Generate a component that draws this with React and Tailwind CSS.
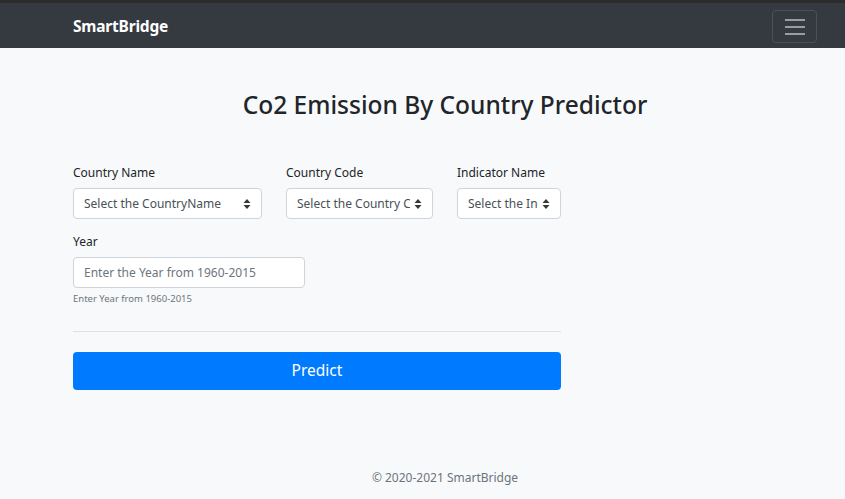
import React from 'react';

const font = { fontFamily: '"Noto Sans", "Open Sans", Arial, sans-serif' };

function Select({ placeholder, width }) {
  return (
    <div className={`relative h-[31px] ${width} bg-white border border-[#ced4da] rounded-[4px] flex items-center pl-[10px] pr-[22px] overflow-hidden`}>
      <span className="text-[12px] text-[#495057] whitespace-nowrap overflow-hidden">{placeholder}</span>
      <svg className="absolute right-[10px] top-[10px]" width="8" height="10" viewBox="0 0 8 10">
        <path d="M4 0 L7.5 4 L0.5 4 Z M4 10 L7.5 6 L0.5 6 Z" fill="#343a40" />
      </svg>
    </div>
  );
}

export default function App() {
  return (
    <div className="min-h-[499px] bg-[#f8f9fa] flex flex-col" style={font}>
      <div className="h-[3px] bg-[#2c2c2c]" />
      <nav className="h-[45px] bg-[#343a40] flex items-center justify-between pl-[73px] pr-[28px]">
        <span className="mt-[3px] text-white font-bold text-[15.5px] tracking-[-0.2px]">SmartBridge</span>
        <button className="mt-[2px] w-[45px] h-[33px] border border-[#4b5157] rounded-[4px] flex flex-col items-center justify-center gap-[5px]">
          <span className="block w-[20px] h-[2px] bg-[#9a9da0]" />
          <span className="block w-[20px] h-[2px] bg-[#9a9da0]" />
          <span className="block w-[20px] h-[2px] bg-[#9a9da0]" />
        </button>
      </nav>

      <main className="flex-1 pl-[73px]">
        <h1 className="text-[24.5px] leading-[36px] font-medium text-[#212529] text-center w-[744px] mt-[39px] mb-[41px]">
          Co2 Emission By Country Predictor
        </h1>

        <div className="w-[488px]">
          <div className="flex gap-[24px]">
            <div className="flex flex-col gap-[6px]">
              <label className="text-[12px] leading-[18px] text-[#212529]">Country Name</label>
              <Select placeholder="Select the CountryName" width="w-[189px]" />
            </div>
            <div className="flex flex-col gap-[6px]">
              <label className="text-[12px] leading-[18px] text-[#212529]">Country Code</label>
              <Select placeholder="Select the Country Code" width="w-[147px]" />
            </div>
            <div className="flex flex-col gap-[6px]">
              <label className="text-[12px] leading-[18px] text-[#212529]">Indicator Name</label>
              <Select placeholder="Select the Indicator Name" width="w-[104px]" />
            </div>
          </div>

          <div className="flex flex-col gap-[6px] mt-[14px]">
            <label className="text-[12px] leading-[18px] text-[#212529]">Year</label>
            <div className="h-[31px] w-[232px] bg-white border border-[#ced4da] rounded-[4px] flex items-center px-[10px]">
              <span className="text-[12px] text-[#6c757d] whitespace-nowrap">Enter the Year from 1960-2015</span>
            </div>
          </div>
          <p className="text-[9.5px] leading-[14px] text-[#6c757d] mt-[4px]">Enter Year from 1960-2015</p>

          <hr className="border-0 border-t border-[#dee2e6] mt-[25px] mb-[20px]" />

          <button className="w-full h-[38px] bg-[#007bff] rounded-[4px] text-white text-[15.5px]">Predict</button>
        </div>
      </main>

      <footer className="text-center pl-[73px] pb-[12px]">
        <span className="block w-[744px] text-center text-[12px] text-[#6c757d]">© 2020-2021 SmartBridge</span>
      </footer>
    </div>
  );
}
